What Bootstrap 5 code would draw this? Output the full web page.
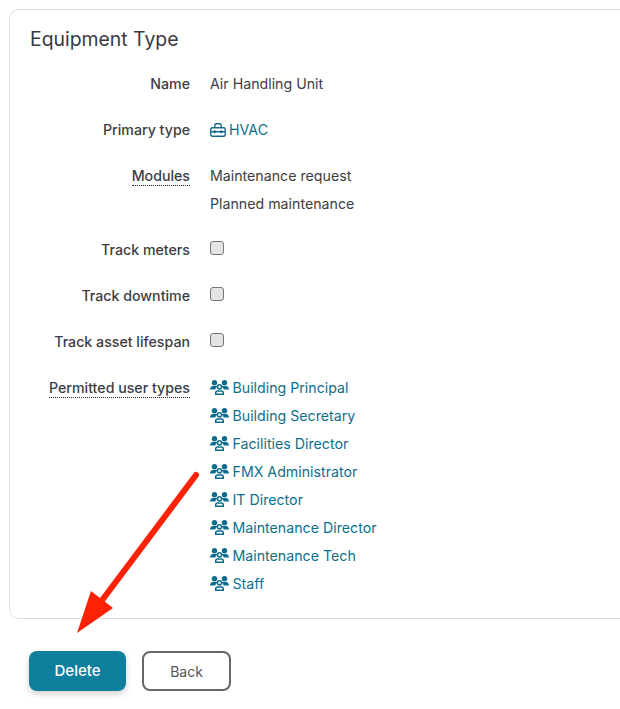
<!DOCTYPE html>
<html lang="en">
<head>
  <meta charset="UTF-8">
  <meta name="viewport" content="width=device-width, initial-scale=1.0">
  <title>Equipment Type</title>
  <link href="https://cdn.jsdelivr.net/npm/bootstrap@5.3.0/dist/css/bootstrap.min.css" rel="stylesheet">
  <style>
    html, body { height: 100%; }
    body {
      font-family: "Inter", "Liberation Sans", sans-serif;
      font-size: 14.2px;
      color: #3d3d42;
      background: #fff;
      overflow: hidden;
      position: relative;
    }
    .page-wrap { padding: 9px 0 0 9px; width: 640px; }
    .type-panel {
      border: 1px solid #dcdcdc;
      border-radius: 10px;
      padding: 16px 20px 20px;
      height: 610px;
    }
    .panel-title { font-size: 19.4px; line-height: 26px; font-weight: 400; margin: 0 0 18px; color: #3a3a3f; }
    .field-row { display: flex; margin-bottom: 18px; line-height: 28px; }
    .field-label { width: 160px; text-align: right; font-weight: 500; flex: none; color: #3d3d42; }
    .field-label span.hint { border-bottom: 1px dotted #222; padding-bottom: 1px; }
    .field-value { margin-left: 20px; }
    .link-teal { color: #0d6f8c; text-decoration: none; }
    .ico { color: #0e6c8c; margin-right: 3px; vertical-align: -2px; }
    .ico-people { margin-right: 3.5px; }
    .fake-check {
      display: block; width: 14px; height: 14px; margin-top: 5px;
      background: #e4e4e4; border: 1px solid #767676; border-radius: 3px;
    }
    .actions { padding: 32px 0 0 20px; display: flex; gap: 16px; }
    .btn-del, .btn-back { height: 40px; border-radius: 8px; font-weight: 500; padding: 0; }
    .btn-del { width: 97px; font-size: 15px; background: #0e7f9c; border: 0; color: #fff; box-shadow: 0 3px 6px rgba(0,0,0,.18); }
    .btn-back { width: 89px; font-size: 14px; background: #fff; border: 2px solid #666; color: #555; font-weight: 400; }
    .arrow-over { position: absolute; left: 0; top: 0; pointer-events: none; }
  </style>
</head>
<body>
<div class="page-wrap">
  <div class="type-panel">
    <h5 class="panel-title">Equipment Type</h5>
    <div class="field-row"><div class="field-label">Name</div><div class="field-value">Air Handling Unit</div></div>
    <div class="field-row">
      <div class="field-label">Primary type</div>
      <div class="field-value"><a href="#" class="link-teal"><svg class="ico" width="16" height="14" viewBox="0 0 16 14" fill="none" stroke="currentColor" stroke-width="1.4"><rect x="0.800" y="4.700" width="14.400" height="8.500" rx="1.500"/><path d="M4.500 4.700l.6-3c.1-.5.4-.9 1-.9h3.800c.6 0 .9.400 1 .9l.6 3M1 8.700h14"/><path d="M4.700 7.300v3M11.300 7.300v3" stroke-width="1.800"/></svg>HVAC</a></div>
    </div>
    <div class="field-row">
      <div class="field-label"><span class="hint">Modules</span></div>
      <div class="field-value"><div>Maintenance request</div><div>Planned maintenance</div></div>
    </div>
    <div class="field-row"><div class="field-label">Track meters</div><div class="field-value"><span class="fake-check"></span></div></div>
    <div class="field-row"><div class="field-label">Track downtime</div><div class="field-value"><span class="fake-check"></span></div></div>
    <div class="field-row"><div class="field-label">Track asset lifespan</div><div class="field-value"><span class="fake-check"></span></div></div>
    <div class="field-row">
      <div class="field-label"><span class="hint">Permitted user types</span></div>
      <div class="field-value" id="userTypes"></div>
    </div>
  </div>
  <div class="actions">
    <button class="btn btn-del">Delete</button>
    <button class="btn btn-back">Back</button>
  </div>
</div>

<svg class="arrow-over" width="620" height="709" viewBox="0 0 620 709">
  <line x1="196" y1="475" x2="100" y2="603" stroke="#fb2205" stroke-width="6" stroke-linecap="round"/>
  <polygon points="77,633 91,591 113,608" fill="#fb2205"/>
</svg>

<script>
const userTypes = ["Building Principal", "Building Secretary", "Facilities Director", "FMX Administrator", "IT Director", "Maintenance Director", "Maintenance Tech", "Staff"];
const peopleIcon = `<svg class="ico ico-people" width="19" height="15" viewBox="0 0 19 15" fill="currentColor">
  <circle cx="4.500" cy="2.700" r="2.700"/><circle cx="14.500" cy="2.700" r="2.700"/>
  <path d="M0 9.500c0-2.300 1.500-3.500 3-3.500h3.200c.5 0 1 .1 1.300.4C6.300 7 5.500 8.200 5.300 9.500H0zM19 9.500c0-2.300-1.500-3.500-3-3.500h-3.200c-.5 0-1 .1-1.300.4 1.200.6 2 1.800 2.200 3.100H19z"/>
  <circle cx="9.500" cy="6.800" r="2.100" fill="none" stroke="currentColor" stroke-width="1.500"/>
  <path d="M5.700 14.200v-1.300c0-1.200 1-1.900 2-1.900h3.600c1 0 2 .7 2 1.900v1.300z" fill="none" stroke="currentColor" stroke-width="1.500"/>
</svg>`;
document.getElementById("userTypes").innerHTML = userTypes
  .map(t => `<div><a href="#" class="link-teal">${peopleIcon}${t}</a></div>`)
  .join("");
</script>
<script src="https://cdn.jsdelivr.net/npm/bootstrap@5.3.0/dist/js/bootstrap.bundle.min.js"></script>
</body>
</html>
